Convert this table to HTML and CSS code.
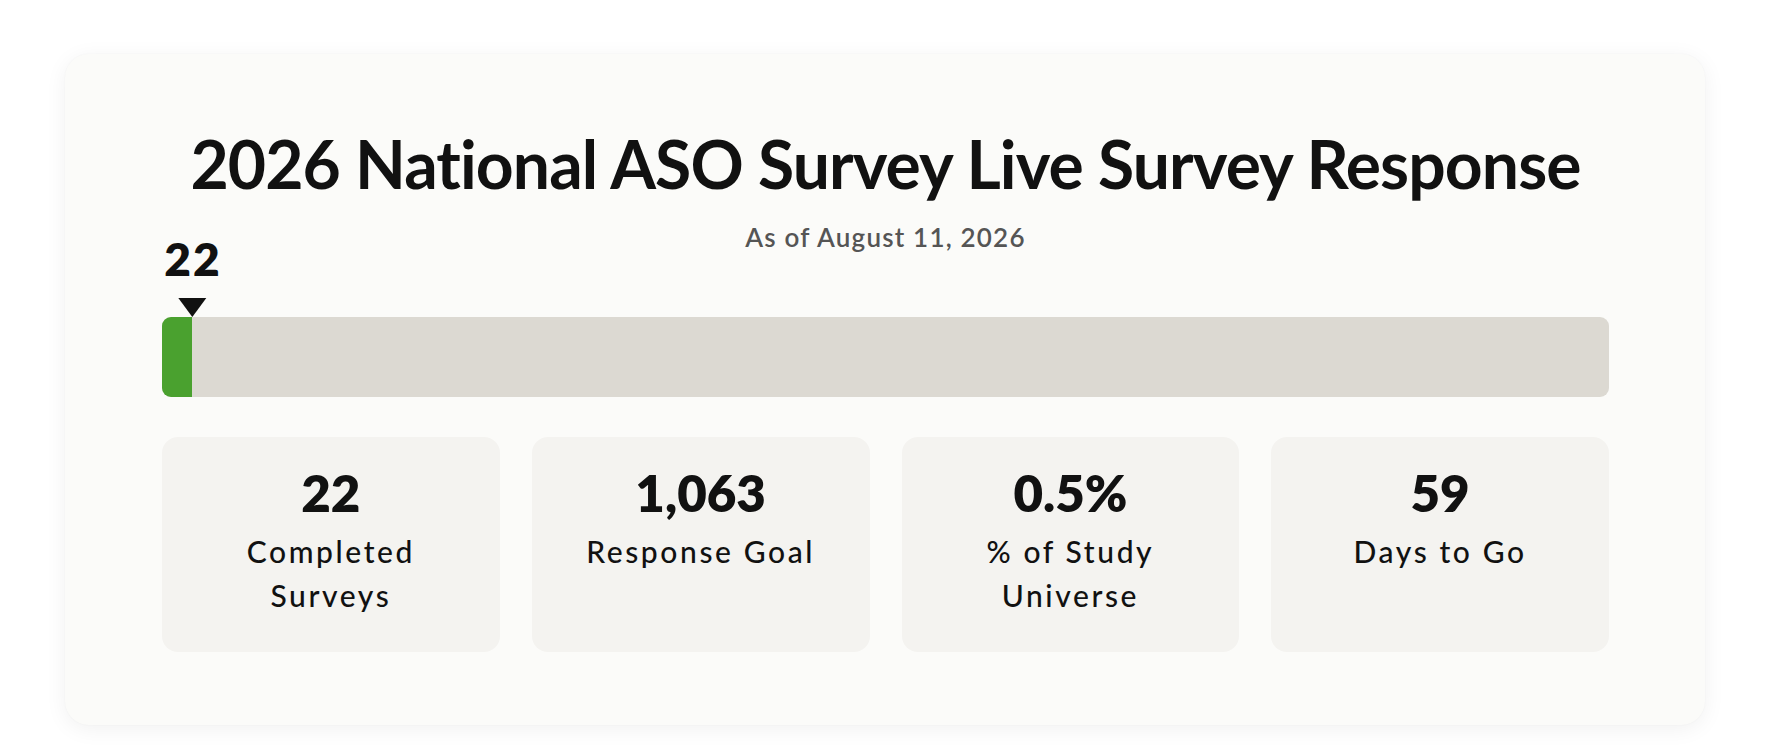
FILE: index.html
```html
<!DOCTYPE html>
<html lang="en">
<head>
<meta charset="utf-8">
<title>2026 National ASO Survey Live Survey Response</title>
<link rel="stylesheet" href="styles.css">
</head>
<body>
<main class="card">
  <h1 class="title">2026 National ASO Survey Live Survey Response</h1>
  <p class="subtitle">As of August 11, 2026</p>
  <div class="progress">
    <div class="marker-row">
      <div class="marker" style="left: 2.07%;">
        <span class="marker-value">22</span>
        <span class="marker-arrow"></span>
      </div>
    </div>
    <div class="track">
      <div class="fill" style="width: 2.07%;"></div>
    </div>
  </div>
  <section class="stats">
    <div class="stat">
      <div class="stat-value">22</div>
      <div class="stat-label">Completed<br>Surveys</div>
    </div>
    <div class="stat">
      <div class="stat-value">1,063</div>
      <div class="stat-label">Response Goal</div>
    </div>
    <div class="stat">
      <div class="stat-value">0.5%</div>
      <div class="stat-label">% of Study<br>Universe</div>
    </div>
    <div class="stat">
      <div class="stat-value">59</div>
      <div class="stat-label">Days to Go</div>
    </div>
  </section>
</main>
</body>
</html>
```
FILE: styles.css
```css
* { box-sizing: border-box; }

html, body {
  margin: 0;
  background: #ffffff;
}

body {
  padding: 54px 73px 24px 65px;
  font-family: "Lato", "Noto Sans", "DejaVu Sans", sans-serif;
  color: #111111;
}

.card {
  background: #fbfbf9;
  border-radius: 24px;
  box-shadow: 0 4px 22px rgba(0, 0, 0, 0.06), 0 0 2px rgba(0, 0, 0, 0.04);
  padding: 70px 96px 73px 97px;
  display: flex;
  flex-direction: column;
}

.title {
  margin: 0;
  text-align: center;
  font-size: 66px;
  font-weight: 700;
  line-height: 80px;
  letter-spacing: -0.9px;
}

.subtitle {
  margin: 18px 0 0;
  text-align: center;
  font-size: 26px;
  font-weight: 600;
  color: #555555;
  letter-spacing: 1.2px;
  line-height: 30px;
}

.progress {
  margin-top: -13px;
}

.marker-row {
  position: relative;
  height: 78px;
}

.marker {
  position: absolute;
  bottom: 0;
  transform: translateX(-50%);
  display: flex;
  flex-direction: column;
  align-items: center;
}

.marker-value {
  font-size: 46px;
  font-weight: 800;
  line-height: 54px;
  letter-spacing: 2px;
  margin-right: -2px;
  margin-bottom: 12px;
}

.marker-arrow {
  width: 0;
  height: 0;
  border-left: 14px solid transparent;
  border-right: 14px solid transparent;
  border-top: 19px solid #111111;
}

.track {
  height: 80px;
  background: #dcd9d2;
  border-radius: 9px;
  overflow: hidden;
  display: flex;
}

.fill {
  background: #4aa12f;
  height: 100%;
}

.stats {
  margin-top: 40px;
  display: grid;
  grid-template-columns: repeat(4, 1fr);
  gap: 32px;
}

.stat {
  background: #f4f3f0;
  border-radius: 16px;
  height: 215px;
  padding-top: 25px;
  text-align: center;
}

.stat-value {
  font-size: 51px;
  font-weight: 800;
  line-height: 62px;
}

.stat-label {
  margin-top: 5px;
  font-size: 30px;
  font-weight: 500;
  line-height: 44px;
  letter-spacing: 2.6px;
}
```
